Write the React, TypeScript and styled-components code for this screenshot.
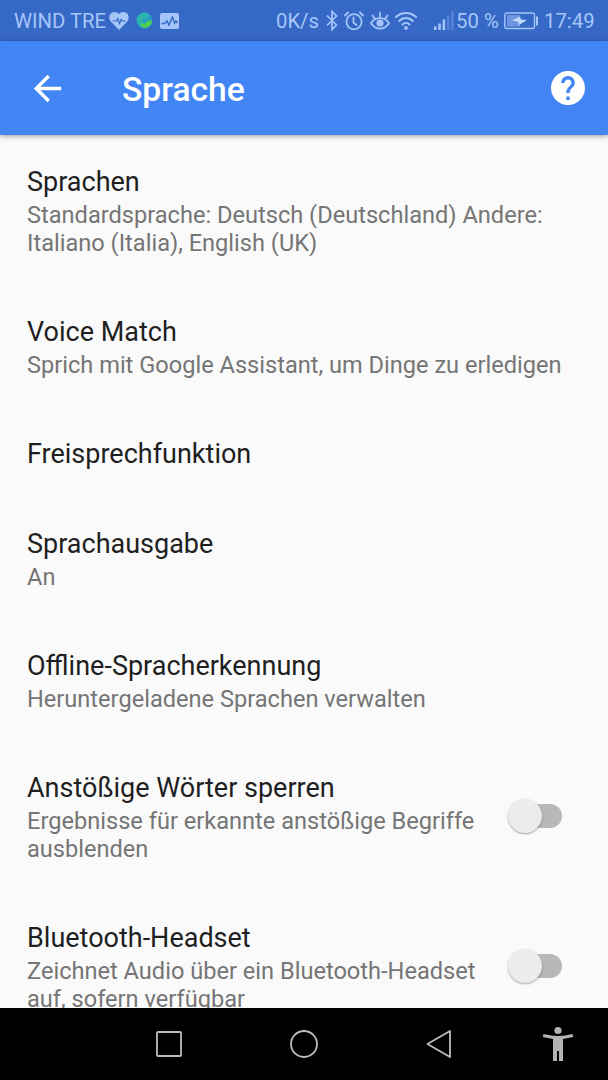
import React from 'react';
import styled, { createGlobalStyle } from 'styled-components';

const GlobalStyle = createGlobalStyle`
  body { margin: 0; background: #fafafa; }
  * { box-sizing: border-box; }
  svg { display: block; flex: none; }
`;

const Screen = styled.div`
  width: 608px;
  height: 1080px;
  display: flex;
  flex-direction: column;
  overflow: hidden;
  background: #fafafa;
  font-family: Roboto, 'Liberation Sans', sans-serif;
`;

const StatusBar = styled.div`
  height: 41px;
  flex: none;
  display: flex;
  align-items: center;
  padding: 0 14px;
  background: #3569c5;
  color: #a6c6fa;
`;

const StatusText = styled.span<{ $width: number }>`
  width: ${p => p.$width}px;
  flex: none;
  white-space: nowrap;
  font-size: 20.3px;
  line-height: 41px;
  padding-top: 2px;
`;

const StatusIcon = styled.svg<{ $left?: number }>`
  margin-left: ${p => p.$left ?? 0}px;
`;

const Spacer = styled.div`
  flex: 1;
`;

const AppBar = styled.header`
  height: 94px;
  flex: none;
  display: flex;
  align-items: center;
  padding: 0 23.5px 0 27px;
  background: #4285f4;
  color: #fff;
  box-shadow: 0 1px 5px rgba(0, 0, 0, 0.4);
  z-index: 1;
`;

const AppTitle = styled.h1`
  margin: 3px 0 0 54px;
  flex: 1;
  font-size: 33.6px;
  font-weight: 500;
  line-height: 40px;
`;

const List = styled.main`
  flex: 1;
  min-height: 0;
  overflow: hidden;
  padding-top: 2px;
`;

const Row = styled.section`
  display: flex;
  align-items: center;
  padding: 29px 46px 29px 27px;
`;

const RowText = styled.div`
  flex: 1;
  display: flex;
  flex-direction: column;
  gap: 3px;
  white-space: nowrap;
`;

const RowTitle = styled.div`
  font-size: 27px;
  line-height: 32px;
  color: #1f1f1f;
`;

const Summary = styled.div`
  padding-bottom: 1px;
  font-size: 23.6px;
  line-height: 28px;
  color: #757575;
`;

const Track = styled.div`
  width: 50px;
  height: 24px;
  flex: none;
  display: flex;
  align-items: center;
  margin-bottom: 5px;
  border-radius: 12px;
  background: #b8b8b8;
`;

const Thumb = styled.div`
  width: 34px;
  height: 34px;
  flex: none;
  margin-left: -4px;
  border-radius: 50%;
  background: #ececec;
  box-shadow: 0 1px 2px rgba(0, 0, 0, 0.35);
`;

const NavBar = styled.nav`
  height: 72px;
  flex: none;
  display: flex;
  align-items: center;
  justify-content: flex-end;
  gap: 95px;
  padding-right: 34.5px;
  background: #000;
`;

const NavKeys = styled.div`
  display: flex;
  gap: 95px;
  margin-right: -12.5px;
`;

type Setting = { title: string; summary?: string[]; toggle?: boolean };

const settings: Setting[] = [
  { title: 'Sprachen', summary: ['Standardsprache: Deutsch (Deutschland) Andere:', 'Italiano (Italia), English (UK)'] },
  { title: 'Voice Match', summary: ['Sprich mit Google Assistant, um Dinge zu erledigen'] },
  { title: 'Freisprechfunktion' },
  { title: 'Sprachausgabe', summary: ['An'] },
  { title: 'Offline-Spracherkennung', summary: ['Heruntergeladene Sprachen verwalten'] },
  { title: 'Anstößige Wörter sperren', summary: ['Ergebnisse für erkannte anstößige Begriffe', 'ausblenden'], toggle: true },
  { title: 'Bluetooth-Headset', summary: ['Zeichnet Audio über ein Bluetooth-Headset', 'auf, sofern verfügbar'], toggle: true },
];

function Status() {
  return (
    <StatusBar>
      <StatusText $width={95}>WIND TRE</StatusText>
      <StatusIcon width="20" height="20" viewBox="0 0 20 20">
        <path d="M10 19 1.800 10.500C-.6 7.500.1 3.500 2.700 1.700 5.200.300 8.200.800 10 3 11.800.800 14.800.300 17.300 1.700 19.900 3.500 20.600 7.500 18.200 10.500Z" fill="currentColor" />
        <path d="M3.500 10h4l1.300-2.500 1.700 5 1.700-4 .8 1.500h3.500" fill="none" stroke="#3569c5" strokeWidth="1.200" />
      </StatusIcon>
      <StatusIcon $left={7} width="17" height="17" viewBox="0 0 17 17">
        <circle cx="8.500" cy="8.500" r="8" fill="#299bc5" />
        <path d="M.8 6C3 1 8 0 11 1l2 3-3 3-4 1 1 3 4 1-3 3C3 15 0 10 .8 6Z" fill="#2bb5ae" />
        <path d="m5 11 3 1 5-4 3 1c0 4-4 7-8 7-3-1-4-3-3-5Z" fill="#4fce55" />
      </StatusIcon>
      <StatusIcon $left={7} width="19" height="16" viewBox="0 0 19 16">
        <rect width="19" height="16" rx="2" fill="currentColor" />
        <path d="M1.500 10.500h3L7 8l2 4 3.500-8 2 6 1.500-2 1.500 2" fill="none" stroke="#3569c5" strokeWidth="1.400" />
      </StatusIcon>
      <Spacer />
      <StatusText $width={49.5}>0K/s</StatusText>
      <StatusIcon width="12" height="21" viewBox="0 0 12 21">
        <path d="m1 5.500 9.500 9.500L6 19.500v-18L10.500 6 1 15.500" fill="none" stroke="currentColor" strokeWidth="1.700" />
      </StatusIcon>
      <StatusIcon $left={6} width="20" height="20" viewBox="0 0 20 20">
        <g fill="none" stroke="currentColor" strokeWidth="1.800" strokeLinecap="round">
          <circle cx="10" cy="10.800" r="7.600" />
          <path d="M9.500 6.500v5l3 2.500M1 4.500l3-3M19 4.500l-3-3" />
        </g>
      </StatusIcon>
      <StatusIcon $left={6} width="20" height="20" viewBox="0 0 20 20">
        <g fill="none" stroke="currentColor" strokeWidth="1.800" strokeLinecap="round">
          <path d="M1 12C5.500 5.500 14.500 5.500 19 12 14.500 19.500 5.500 19.500 1 12ZM10 6V2M4.700 7.500 2.500 4.500M15.300 7.500l2.200-3" />
        </g>
        <circle cx="10" cy="12" r="3.600" fill="currentColor" />
      </StatusIcon>
      <StatusIcon $left={5} width="22" height="20" viewBox="0 0 22 20">
        <g fill="none" stroke="currentColor" strokeWidth="2" strokeLinecap="round">
          <path d="M1 6C6.500.500 15.500.500 21 6M4.300 10c3.700-4 9.700-4 13.400 0M7.500 13.500c2-2 5-2 7 0" />
        </g>
        <circle cx="11" cy="17" r="1.900" fill="currentColor" />
      </StatusIcon>
      <StatusIcon $left={17.5} width="20" height="19" viewBox="0 0 20 19">
        <path d="M0 15.500h2.500V19H0ZM4.300 12.500h2.500V19H4.300ZM8.600 8.500h2.500V19H8.600Z" fill="currentColor" />
        <path d="M12.900 4.500h2.500V19h-2.500ZM17.200 0h2.500v19h-2.500Z" fill="currentColor" opacity=".3" />
      </StatusIcon>
      <StatusText $width={50}>&#8202;50 %</StatusText>
      <StatusIcon width="35" height="18" viewBox="0 0 35 18">
        <rect x=".8" y="1" width="29.700" height="15.500" rx="2" fill="none" stroke="currentColor" strokeWidth="1.400" />
        <path d="M3 3h13v11.500H3Z" fill="currentColor" opacity=".5" />
        <path d="m8 8.500 8-4 1 3 6 .5-8 5-1-3.500Z" fill="#c3dafc" />
        <path d="M32 4.500h2v9h-2Z" fill="currentColor" />
      </StatusIcon>
      <StatusText $width={55}>&nbsp;17:49</StatusText>
    </StatusBar>
  );
}

export default function App() {
  return (
    <>
      <GlobalStyle />
      <Screen>
        <Status />
        <AppBar>
          <svg width="41" height="41" viewBox="0 0 24 24">
            <path d="M20 11H7.830l5.590-5.590L12 4l-8 8 8 8 1.410-1.410L7.830 13H20v-2z" fill="#fff" />
          </svg>
          <AppTitle>Sprache</AppTitle>
          <svg width="34" height="34" viewBox="2 2 20 20">
            <path d="M12 2C6.480 2 2 6.480 2 12s4.480 10 10 10 10-4.480 10-10S17.520 2 12 2zm1 17h-2v-2h2v2zm2.070-7.750-.9.920C13.450 12.900 13 13.500 13 15h-2v-.5c0-1.100.450-2.100 1.170-2.830l1.240-1.260c.370-.360.590-.860.590-1.410 0-1.100-.9-2-2-2s-2 .9-2 2H8c0-2.210 1.790-4 4-4s4 1.790 4 4c0 .880-.360 1.680-.930 2.250z" fill="#fff" />
          </svg>
        </AppBar>
        <List>
          {settings.map(s => (
            <Row key={s.title}>
              <RowText>
                <RowTitle>{s.title}</RowTitle>
                {s.summary && (
                  <Summary>{s.summary.map(line => <div key={line}>{line}</div>)}</Summary>
                )}
              </RowText>
              {s.toggle && <Track><Thumb /></Track>}
            </Row>
          ))}
        </List>
        <NavBar>
          <NavKeys>
            <svg width="40" height="40" viewBox="0 0 40 40" fill="none" stroke="#bdbdbd" strokeWidth="1.800">
              <rect x="8" y="8" width="24" height="24" rx="1" />
            </svg>
            <svg width="40" height="40" viewBox="0 0 40 40" fill="none" stroke="#bdbdbd" strokeWidth="1.800">
              <circle cx="20" cy="20" r="13" />
            </svg>
            <svg width="40" height="40" viewBox="0 0 40 40" fill="none" stroke="#bdbdbd" strokeWidth="1.800" strokeLinejoin="round">
              <path d="M31 7v26L8.500 20Z" />
            </svg>
          </NavKeys>
          <svg width="32" height="36" viewBox="0 0 32 36" fill="#b3b3b3">
            <circle cx="16" cy="4.500" r="3.600" />
            <path d="M1.500 8Q16 12 30.500 8l.7 3L21 13v22h-4V25h-2v10h-4V13L.8 11Z" />
          </svg>
        </NavBar>
      </Screen>
    </>
  );
}
